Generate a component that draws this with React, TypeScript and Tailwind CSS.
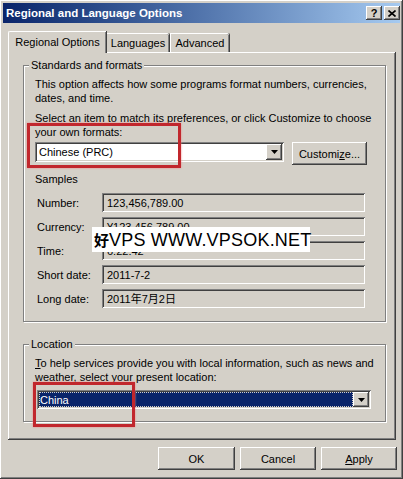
import { FC, ReactNode } from 'react';

const raised =
    'shadow-[inset_-1px_-1px_#404040,inset_1px_1px_#ffffff,inset_-2px_-2px_#808080,inset_2px_2px_#d4d0c8]';
const sunken =
    'shadow-[inset_1px_1px_#808080,inset_-1px_-1px_#ffffff,inset_2px_2px_#404040,inset_-2px_-2px_#d4d0c8]';

const Arrow: FC = () => (
    <svg width="7" height="4" viewBox="0 0 7 4">
        <path d="M0 0h7L3.5 4z" fill="#000" />
    </svg>
);

const DropButton: FC = () => (
    <div className={`w-[16px] h-full flex items-center justify-center bg-[#d4d0c8] ${raised}`}>
        <Arrow />
    </div>
);

const GroupBox: FC<{ title: string; className: string; children: ReactNode }> = ({ title, className, children }) => (
    <div
        className={`relative border border-[#808080] shadow-[inset_1px_1px_#ffffff,1px_1px_#ffffff] ${className}`}
    >
        <span className="absolute -top-[8px] left-[5px] bg-[#d4d0c8] px-[2px] leading-[14px]">{title}</span>
        {children}
    </div>
);

const SampleRow: FC<{ label: string; value: string }> = ({ label, value }) => (
    <div className="flex items-center h-[19px]">
        <span className="w-[67px] pl-[2px]">{label}</span>
        <div className={`w-[263px] h-[19px] flex items-center pl-[5px] pt-[1px] ${sunken}`}>{value}</div>
    </div>
);

const samples = [
    { label: 'Number:', value: '123,456,789.00' },
    { label: 'Currency:', value: '¥123,456,789.00' },
    { label: 'Time:', value: '6:22:42' },
    { label: 'Short date:', value: '2011-7-2' },
    { label: 'Long date:', value: '2011年7月2日' },
];

const Button: FC<{ children: ReactNode; className?: string }> = ({ children, className = '' }) => (
    <div className={`h-[23px] flex items-center justify-center bg-[#d4d0c8] ${raised} ${className}`}>
        {children}
    </div>
);

const App: FC = () => {
    return (
        <div
            className={`relative w-[403px] h-[479px] bg-[#d4d0c8] p-[3px] text-[11px] leading-[14px] text-black ${raised}`}
            style={{ fontFamily: '"Liberation Sans", "Noto Sans CJK SC", sans-serif' }}
        >
            {/* Title bar */}
            <div className="h-[20px] flex items-center justify-between pl-[3px] pr-[0px] bg-gradient-to-r from-[#0a246a] to-[#a6caf0]">
                <span className="text-white font-bold text-[11.5px]">Regional and Language Options</span>
                <div className="flex gap-[2px]">
                    <div className={`w-[16px] h-[14px] flex items-center justify-center bg-[#d4d0c8] font-bold text-[11px] leading-none ${raised}`}>
                        ?
                    </div>
                    <div className={`w-[16px] h-[14px] flex items-center justify-center bg-[#d4d0c8] ${raised}`}>
                        <svg width="8" height="7" viewBox="0 0 8 7">
                            <path d="M0.5 0.5l7 6M7.5 0.5l-7 6" stroke="#000" strokeWidth="1.6" />
                        </svg>
                    </div>
                </div>
            </div>

            {/* Tabs */}
            <div className="flex items-end h-[21px] mt-[8px] ml-[5px] relative z-10">
                <div className="h-[22px] -mb-[1px] w-[98px] flex items-start pt-[3px] justify-center bg-[#d4d0c8] border-t border-l border-white rounded-tl-[2px] shadow-[inset_-1px_0_#808080,1px_0_#404040]">
                    Regional Options
                </div>
                <div className="h-[19px] w-[62px] flex items-center justify-center border-t border-white rounded-tr-[2px] shadow-[inset_-1px_0_#808080,1px_0_#404040] ml-[1px]">
                    Languages
                </div>
                <div className="h-[19px] w-[59px] flex items-center justify-center border-t border-l border-white rounded-tr-[2px] shadow-[inset_-1px_0_#808080,1px_0_#404040] ml-[1px]">
                    Advanced
                </div>
            </div>

            {/* Tab panel */}
            <div className={`ml-[5px] w-[388px] h-[388px] pt-[13px] pl-[15px] ${raised}`}>
                <GroupBox title="Standards and formats" className="w-[363px] h-[257px] pt-[11px] pl-[11px]">
                    <p>
                        This option affects how some programs format numbers, currencies,
                        <br />
                        dates, and time.
                    </p>
                    <p className="mt-[6px]">
                        Select an item to match its preferences, or click Customize to choose
                        <br />
                        your own formats:
                    </p>
                    <div className="flex mt-[3px] gap-[8px]">
                        <div className={`w-[249px] h-[20px] bg-white flex items-center justify-between p-[2px] ${sunken}`}>
                            <span className="pl-[2px]">Chinese (PRC)</span>
                            <DropButton />
                        </div>
                        <Button className="w-[75px] h-[20px]">
                            <span>
                                Customi<span className="underline">z</span>e...
                            </span>
                        </Button>
                    </div>
                    <p className="mt-[7px]">Samples</p>
                    <div className="flex flex-col gap-[5px] mt-[7px]">
                        {samples.map((s) => (
                            <SampleRow key={s.label} label={s.label} value={s.value} />
                        ))}
                    </div>
                </GroupBox>

                <GroupBox title="Location" className="w-[363px] h-[78px] mt-[22px] pt-[11px] pl-[11px]">
                    <p>
                        <span className="underline">T</span>o help services provide you with local information, such as news and
                        <br />
                        weather, select your present location:
                    </p>
                    <div className={`w-[334px] h-[19px] ml-[2px] mt-[6px] bg-white flex p-[2px] ${sunken}`}>
                        <div className="flex-1 bg-[#0a246a] text-white flex items-center pl-[1px] outline outline-1 outline-dotted outline-[#d4d0c8] -outline-offset-1">
                            China
                        </div>
                        <DropButton />
                    </div>
                </GroupBox>
            </div>

            {/* Dialog buttons */}
            <div className="flex justify-end gap-[5px] mt-[7px] pr-[3px]">
                <Button className="w-[77px]">OK</Button>
                <Button className="w-[76px]">Cancel</Button>
                <Button className="w-[76px]">
                    <span>
                        <span className="underline">A</span>pply
                    </span>
                </Button>
            </div>

            {/* Watermark */}
            <div className="absolute left-[92px] top-[227px] w-[218px] h-[25px] bg-white flex items-center pl-[2px] whitespace-nowrap leading-none">
                <span style={{ fontFamily: '"Noto Sans CJK SC", sans-serif' }} className="text-[15px] font-bold">好</span>
                <span style={{ fontFamily: '"Liberation Sans", sans-serif' }} className="text-[18px] tracking-[0.2px]">VPS WWW.VPSOK.NET</span>
            </div>

            {/* Red annotation boxes */}
            <div className="absolute left-[27px] top-[123px] w-[154px] h-[45px] border-[3px] border-[#c1272d] shadow-[0_0_2px_#e88]" />
            <div className="absolute left-[33px] top-[382px] w-[102px] h-[45px] border-[3px] border-[#c1272d] shadow-[0_0_2px_#e88]" />
        </div>
    );
};

export default App;
